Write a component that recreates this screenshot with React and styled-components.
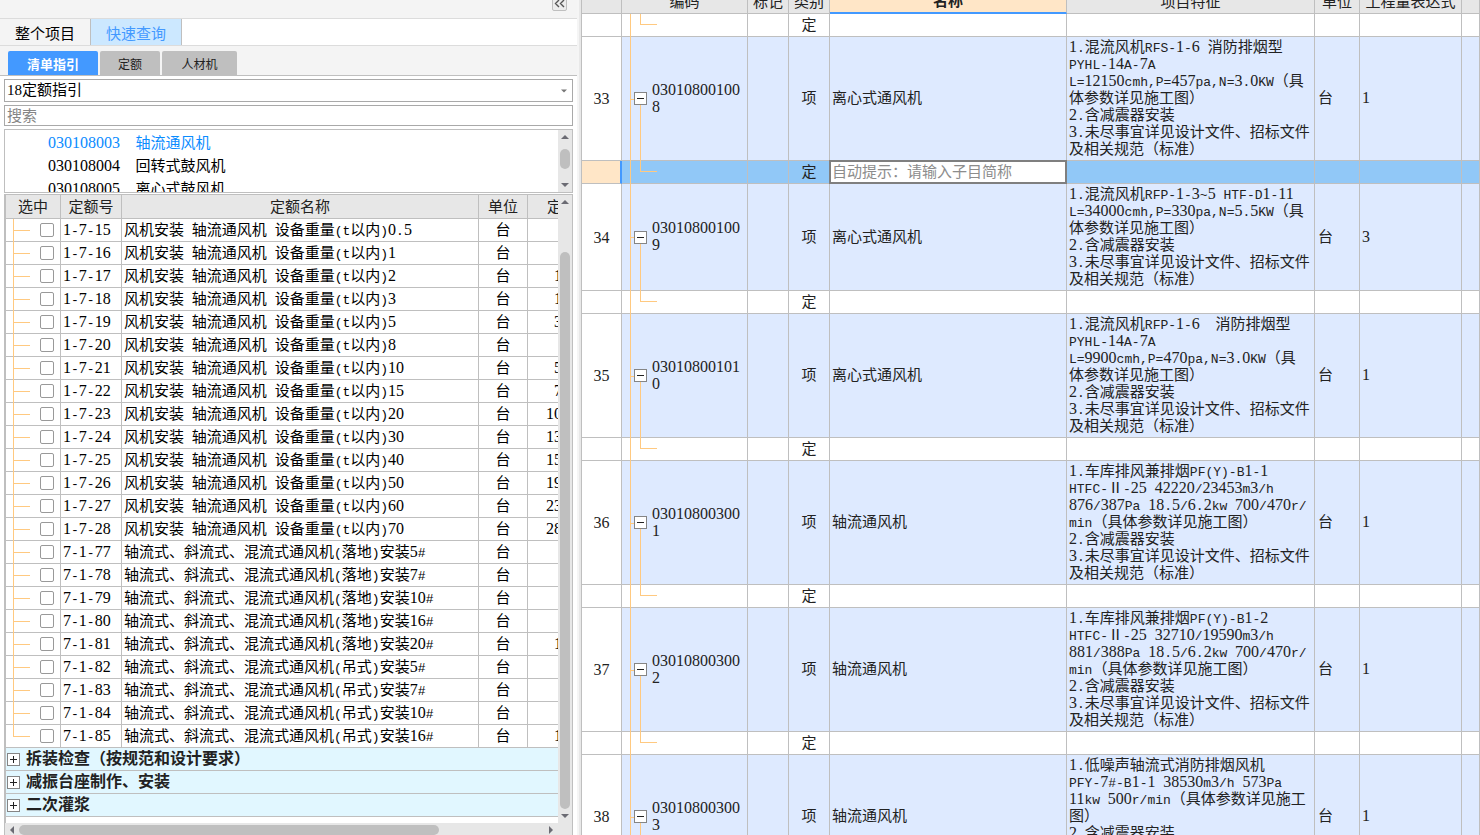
import React, { useState } from 'react';
import styled, { createGlobalStyle, css } from 'styled-components';

const LINE = '#bfbfbf';
const TREE = '#ffc980';
const CJK = '"Noto Sans CJK SC", sans-serif';

const GlobalStyle = createGlobalStyle`
  * {
    box-sizing: border-box;
  }
  body {
    margin: 0;
    overflow: hidden;
    background: #fff;
    color: #000;
    font-family: ${CJK};
    font-size: 15px;
    line-height: 17px;
  }
  button, input, select {
    margin: 0;
    padding: 0;
    border: 0;
    border-radius: 0;
    outline: 0;
    background: none;
    color: inherit;
    font: inherit;
  }
`;

const Page = styled.div`
  display: flex;
  height: 100vh;
  overflow: hidden;
`;

/* ---------- text ---------- */

const Digits = styled.span`
  font-family: "Liberation Serif", serif;
  font-size: 16px;
  line-height: 0;
`;

const Latin = styled.span`
  font-family: "Liberation Mono", monospace;
  font-size: 13px;
  line-height: 0;
`;

// half-width characters get their own fonts so they stay on an 8px grid
function Mixed({ children }) {
    const parts = String(children).match(/[0-9]+|[ -/:-~]+|[^ -~]+/g) || [];
    return parts.map((part, i) => {
        if (/^[0-9]/.test(part)) return <Digits key={i}>{part}</Digits>;
        if (/^[ -~]/.test(part)) return <Latin key={i}>{part}</Latin>;
        return <React.Fragment key={i}>{part}</React.Fragment>;
    });
}

/* ---------- left panel ---------- */

const SidePanel = styled.aside`
  display: flex;
  flex-direction: column;
  flex: 0 0 577px;
  min-width: 0;
`;

const TitleBar = styled.div`
  display: flex;
  flex: 0 0 19px;
  justify-content: flex-end;
  align-items: flex-start;
  padding-right: 10px;
  border-bottom: 1px solid #dcdcdc;
  background: #f4f4f4;
`;

const CollapseButton = styled.button`
  display: flex;
  align-items: center;
  justify-content: center;
  width: 15px;
  height: 15px;
  margin-top: -4px;
  border: 1px solid ${LINE};
  border-radius: 2px;
  background: #ececec;
`;

const MainTabs = styled.div`
  display: flex;
  flex: 0 0 27px;
  border-bottom: 1px solid #dcdcdc;
`;

const MainTab = styled.button`
  width: 91px;
  padding-top: 1px;
  border-right: 1px solid ${LINE};
  background: ${(p) => (p.$active ? '#cce8ff' : '#f4f4f4')};
  color: ${(p) => (p.$active ? '#4399ff' : '#000')};
`;

const SubTabs = styled.div`
  display: flex;
  flex: 0 0 30px;
  align-items: flex-end;
  gap: 2px;
  padding-left: 8px;
  border-bottom: 1px solid ${LINE};
  background: #f4f4f4;
`;

const SubTab = styled.button`
  width: ${(p) => p.$width}px;
  height: 24px;
  border-radius: 2px 2px 0 0;
  background: ${LINE};
  color: #222;
  font-size: 12px;
  ${(p) => p.$active && css`
    background: #4399ff;
    color: #fff;
    font-size: 13px;
    font-weight: bold;
  `}
`;

const SideBody = styled.div`
  display: flex;
  flex: 1;
  flex-direction: column;
  min-height: 0;
  margin-bottom: -3px;
  padding: 3px 4px 0;
`;

const SelectBox = styled.div`
  display: grid;
  flex: 0 0 23px;
  grid-template-columns: 1fr 16px;
  align-items: center;
  margin-bottom: 3px;
  border: 1px solid #a9a9a9;
`;

const Select = styled.select`
  grid-area: 1 / 1 / 2 / 3;
  height: 21px;
  padding-left: 2px;
  appearance: none;
  font-family: "Liberation Serif", ${CJK};
`;

const SelectArrow = styled.svg`
  grid-area: 1 / 2 / 2 / 3;
  justify-self: center;
  pointer-events: none;
`;

const SearchInput = styled.input`
  flex: 0 0 21px;
  margin-bottom: 3px;
  padding: 0 0 2px 2px;
  border: 1px solid #a9a9a9;
  &::placeholder {
    color: #858585;
  }
`;

const ListBox = styled.div`
  display: flex;
  flex: 0 0 64px;
  height: 64px;
  min-height: 0;
  margin-bottom: 1px;
  overflow: hidden;
  border: 1px solid ${LINE};
`;

const List = styled.ul`
  flex: 1;
  margin: 0;
  padding: 0;
  overflow: hidden;
  list-style: none;
`;

const ListItem = styled.li`
  height: 23px;
  padding-left: 43px;
  line-height: 23px;
  white-space: pre;
  color: ${(p) => (p.$active ? '#0a8cff' : '#000')};
`;

/* ---------- scrollbars ---------- */

const ScrollTrack = styled.div`
  display: flex;
  flex: 0 0 14px;
  flex-direction: ${(p) => (p.$horizontal ? 'row' : 'column')};
  align-items: center;
  min-width: 0;
  background: #e7e7e7;
`;

const ScrollSpace = styled.div`
  flex: ${(p) => p.$grow || 0} 0 ${(p) => p.$size || 0}px;
`;

const ScrollThumb = styled.div`
  flex: ${(p) => p.$grow || 0} 0 ${(p) => p.$size || 0}px;
  width: ${(p) => (p.$horizontal ? 'auto' : '10px')};
  height: ${(p) => (p.$horizontal ? '10px' : 'auto')};
  border-radius: 5px;
  background: ${LINE};
`;

const ArrowIcon = styled.svg`
  flex: none;
`;

const ARROWS = {
    up: 'M7 5 L11 9 H3 Z',
    down: 'M7 9 L11 5 H3 Z',
    left: 'M5 7 L9 3 V11 Z',
    right: 'M9 7 L5 3 V11 Z',
};

function Arrow({ dir }) {
    return (
        <ArrowIcon width="14" height="14" viewBox="0 0 14 14">
            <path d={ARROWS[dir]} fill="#6b6b73" />
        </ArrowIcon>
    );
}

/* ---------- quota table ---------- */

const QuotaBox = styled.div`
  display: flex;
  flex: 1;
  min-height: 0;
  border: 1px solid ${LINE};
`;

const QuotaMain = styled.div`
  display: flex;
  flex: 1;
  flex-direction: column;
  min-width: 0;
`;

const QuotaView = styled.div`
  flex: 1;
  min-height: 0;
  overflow: hidden;
  border-left: 1px solid ${LINE};
`;

const QuotaTable = styled.table`
  width: 556px;
  border-collapse: separate;
  border-spacing: 0;
  table-layout: fixed;
`;

const QuotaTh = styled.th`
  height: 24px;
  padding: 0 0 2px;
  border-right: 1px solid ${LINE};
  border-bottom: 1px solid ${LINE};
  background: #e7e7e7;
  color: #222;
  font-weight: normal;
  white-space: nowrap;
  &:last-child {
    padding-left: 19px;
    text-align: left;
  }
`;

const QuotaTd = styled.td`
  height: 23px;
  padding: 0 0 4px 2px;
  border-right: 1px solid ${LINE};
  border-bottom: 1px solid ${LINE};
  white-space: pre;
`;

const PickTd = styled(QuotaTd)`
  padding: 0;
`;

const UnitTd = styled(QuotaTd)`
  padding-left: 0;
  text-align: center;
`;

const PriceTd = styled(QuotaTd)`
  border-right: 0;
  text-align: right;
`;

const PickCell = styled.div`
  display: flex;
  align-items: center;
  height: 22px;
  padding-left: 7px;
`;

const Branch = styled.span`
  flex: 0 0 17px;
  height: 22px;
  margin-right: 10px;
  &::before {
    content: "";
    display: block;
    height: 11px;
    border-left: 1px solid ${TREE};
    border-bottom: 1px solid ${TREE};
  }
  &::after {
    content: "";
    display: block;
    height: 11px;
    border-left: 1px solid ${(p) => (p.$last ? 'transparent' : TREE)};
  }
`;

const CheckBox = styled.input`
  width: 14px;
  height: 14px;
  border: 1px solid #999;
  border-radius: 2px;
  background: #fff;
  appearance: none;
  &:checked {
    background: #4399ff;
  }
`;

const GroupTd = styled.td`
  height: 23px;
  padding: 0 0 0 1px;
  border-bottom: 1px solid ${LINE};
  background: #e1f7ff;
  color: #222;
`;

const GroupLabel = styled.div`
  display: flex;
  align-items: center;
  gap: 6px;
  height: 22px;
  font-size: 16px;
  font-weight: bold;
`;

const GroupName = styled.span`
  padding-bottom: 3px;
`;

const ToggleButton = styled.button`
  display: flex;
  flex: none;
  width: 13px;
  height: 13px;
  border: 1px solid #858585;
  background: #fff;
`;

function Toggle({ open, label }) {
    return (
        <ToggleButton aria-label={label}>
            <svg width="11" height="11" viewBox="0 0 11 11">
                <path d={open ? 'M2 5.5H9' : 'M2 5.5H9M5.5 2V9'} stroke="#222" fill="none" />
            </svg>
        </ToggleButton>
    );
}

/* ---------- bill table ---------- */

const Splitter = styled.div`
  flex: 0 0 5px;
  border-right: 1px solid ${LINE};
  background: linear-gradient(90deg, #f5f5f5 0 2px, #e8e8e8 2px);
`;

const BillPanel = styled.main`
  flex: 1;
  min-width: 0;
  overflow: hidden;
  color: #222;
`;

// scrolled a little, so the head row is cut by the top edge
const BillTable = styled.table`
  width: 100%;
  margin-top: -9px;
  border-collapse: separate;
  border-spacing: 0;
  table-layout: fixed;
`;

const BillTh = styled.th`
  height: 23px;
  padding: 0 0 4px;
  border-right: 1px solid ${LINE};
  border-bottom: ${(p) => (p.$active ? '2px solid #4399ff' : `1px solid ${LINE}`)};
  background: ${(p) => (p.$active ? '#ffe6c7' : '#e7e7e7')};
  font-weight: ${(p) => (p.$active ? 'bold' : 'normal')};
  white-space: nowrap;
`;

const BillRow = styled.tr`
  background: ${(p) => p.$bg};
`;

const BillTd = styled.td`
  position: relative;
  height: 23px;
  padding: 0 0 4px 2px;
  border-right: 1px solid ${LINE};
  border-bottom: 1px solid ${LINE};
  white-space: pre;
`;

const IndexTd = styled(BillTd)`
  padding: 0 0 2px;
  background: #fff;
  text-align: center;
  ${(p) => p.$selected && css`
    border-right: 2px solid #4399ff;
    background: #ffe6c7;
  `}
`;

const KindTd = styled(BillTd)`
  padding-left: 0;
  text-align: center;
`;

const UnitCell = styled(BillTd)`
  padding-left: 3px;
`;

const CodeTd = styled(BillTd)`
  padding: 0 0 0 12px;
  &::before {
    content: "";
    position: absolute;
    top: 0;
    bottom: -1px;
    left: 8px;
    border-left: 1px solid ${TREE};
  }
`;

const ItemLines = styled.span`
  position: absolute;
  top: 50%;
  bottom: -1px;
  left: 8px;
  width: 11px;
  border-top: 1px solid ${TREE};
  border-right: 1px solid ${TREE};
`;

const SubLines = styled.span`
  position: absolute;
  top: 0;
  left: 18px;
  width: 17px;
  height: 11px;
  border-bottom: 1px solid ${TREE};
  border-left: 1px solid ${TREE};
`;

const CodeLabel = styled.div`
  position: relative;
  display: flex;
  align-items: center;
  gap: 5px;
`;

const CodeText = styled.div`
  width: 90px;
  padding-bottom: 4px;
  white-space: pre;
`;

const NameInput = styled.input`
  position: absolute;
  top: -1px;
  left: -1px;
  width: calc(100% + 2px);
  height: 24px;
  padding: 0 0 4px 1px;
  border: 2px solid #7f7f7f;
  background: #fff;
  &::placeholder {
    color: #8c8c8c;
  }
`;

/* ---------- data ---------- */

const guideList = [
    ['030108003', '轴流通风机'],
    ['030108004', '回转式鼓风机'],
    ['030108005', '离心式鼓风机'],
];

const fan = '风机安装 轴流通风机 设备重量(t以内)';
const floor = '轴流式、斜流式、混流式通风机(落地)安装';
const hung = '轴流式、斜流式、混流式通风机(吊式)安装';

const quotas = [
    ['1-7-15', fan + '0.5', ''],
    ['1-7-16', fan + '1', ''],
    ['1-7-17', fan + '2', '1'],
    ['1-7-18', fan + '3', '1'],
    ['1-7-19', fan + '5', '3'],
    ['1-7-20', fan + '8', ''],
    ['1-7-21', fan + '10', '5'],
    ['1-7-22', fan + '15', '7'],
    ['1-7-23', fan + '20', '10'],
    ['1-7-24', fan + '30', '13'],
    ['1-7-25', fan + '40', '15'],
    ['1-7-26', fan + '50', '19'],
    ['1-7-27', fan + '60', '23'],
    ['1-7-28', fan + '70', '28'],
    ['7-1-77', floor + '5#', ''],
    ['7-1-78', floor + '7#', ''],
    ['7-1-79', floor + '10#', ''],
    ['7-1-80', floor + '16#', ''],
    ['7-1-81', floor + '20#', '1'],
    ['7-1-82', hung + '5#', ''],
    ['7-1-83', hung + '7#', ''],
    ['7-1-84', hung + '10#', ''],
    ['7-1-85', hung + '16#', '1'],
];

const groups = ['拆装检查（按规范和设计要求）', '减振台座制作、安装', '二次灌浆'];

const commonNotes = `2.含减震器安装
3.未尽事宜详见设计文件、招标文件
及相关规范（标准）`;

const bills = [
    {
        no: 33, code: '03010800100\n8', name: '离心式通风机', qty: 1, editing: true,
        feature: `1.混流风机RFS-1-6 消防排烟型
PYHL-14A-7A
L=12150cmh,P=457pa,N=3.0KW（具
体参数详见施工图）
${commonNotes}`,
    },
    {
        no: 34, code: '03010800100\n9', name: '离心式通风机', qty: 3,
        feature: `1.混流风机RFP-1-3~5 HTF-D1-11
L=34000cmh,P=330pa,N=5.5KW（具
体参数详见施工图）
${commonNotes}`,
    },
    {
        no: 35, code: '03010800101\n0', name: '离心式通风机', qty: 1,
        feature: `1.混流风机RFP-1-6  消防排烟型
PYHL-14A-7A
L=9900cmh,P=470pa,N=3.0KW（具
体参数详见施工图）
${commonNotes}`,
    },
    {
        no: 36, code: '03010800300\n1', name: '轴流通风机', qty: 1,
        feature: `1.车库排风兼排烟PF(Y)-B1-1
HTFC-Ⅱ-25 42220/23453m3/h
876/387Pa 18.5/6.2kw 700/470r/
min（具体参数详见施工图）
${commonNotes}`,
    },
    {
        no: 37, code: '03010800300\n2', name: '轴流通风机', qty: 1,
        feature: `1.车库排风兼排烟PF(Y)-B1-2
HTFC-Ⅱ-25 32710/19590m3/h
881/388Pa 18.5/6.2kw 700/470r/
min（具体参数详见施工图）
${commonNotes}`,
    },
    {
        no: 38, code: '03010800300\n3', name: '轴流通风机', qty: 1,
        feature: `1.低噪声轴流式消防排烟风机
PFY-7#-B1-1 38530m3/h 573Pa
11kw 500r/min（具体参数详见施工
图）
${commonNotes}`,
    },
];

function SubRow({ selected }) {
    return (
        <BillRow $bg={selected ? '#91c8f7' : '#fff'}>
            <IndexTd $selected={selected} />
            <CodeTd><SubLines /></CodeTd>
            <BillTd />
            <KindTd>定</KindTd>
            <BillTd>
                {selected && <NameInput aria-label="名称" placeholder="自动提示：请输入子目简称" />}
            </BillTd>
            <BillTd />
            <BillTd />
            <BillTd />
            <BillTd />
        </BillRow>
    );
}

function BillItem({ item }) {
    return (
        <>
            <BillRow $bg="#deeaff">
                <IndexTd><Mixed>{item.no}</Mixed></IndexTd>
                <CodeTd>
                    <ItemLines />
                    <CodeLabel>
                        <Toggle open label="收起" />
                        <CodeText><Mixed>{item.code}</Mixed></CodeText>
                    </CodeLabel>
                </CodeTd>
                <BillTd />
                <KindTd>项</KindTd>
                <BillTd>{item.name}</BillTd>
                <BillTd><Mixed>{item.feature}</Mixed></BillTd>
                <UnitCell>台</UnitCell>
                <BillTd><Mixed>{item.qty}</Mixed></BillTd>
                <BillTd />
            </BillRow>
            <SubRow selected={item.editing} />
        </>
    );
}

function QuotaPanel() {
    return (
        <QuotaBox>
            <QuotaMain>
                <QuotaView>
                    <QuotaTable>
                        <colgroup>
                            <col width="55" />
                            <col width="61" />
                            <col width="357" />
                            <col width="49" />
                            <col width="34" />
                        </colgroup>
                        <thead>
                            <tr>
                                <QuotaTh>选中</QuotaTh>
                                <QuotaTh>定额号</QuotaTh>
                                <QuotaTh>定额名称</QuotaTh>
                                <QuotaTh>单位</QuotaTh>
                                <QuotaTh>定</QuotaTh>
                            </tr>
                        </thead>
                        <tbody>
                            {quotas.map(([code, name, price], i) => (
                                <tr key={code}>
                                    <PickTd>
                                        <PickCell>
                                            <Branch $last={i === quotas.length - 1} />
                                            <CheckBox type="checkbox" aria-label={code} />
                                        </PickCell>
                                    </PickTd>
                                    <QuotaTd><Mixed>{code}</Mixed></QuotaTd>
                                    <QuotaTd><Mixed>{name}</Mixed></QuotaTd>
                                    <UnitTd>台</UnitTd>
                                    <PriceTd><Mixed>{price}</Mixed></PriceTd>
                                </tr>
                            ))}
                            {groups.map((group) => (
                                <tr key={group}>
                                    <GroupTd colSpan={5}>
                                        <GroupLabel>
                                            <Toggle label={group} />
                                            <GroupName>{group}</GroupName>
                                        </GroupLabel>
                                    </GroupTd>
                                </tr>
                            ))}
                        </tbody>
                    </QuotaTable>
                </QuotaView>
                <ScrollTrack $horizontal>
                    <Arrow dir="left" />
                    <ScrollThumb $horizontal $size={420} />
                    <ScrollSpace $grow={1} />
                    <Arrow dir="right" />
                </ScrollTrack>
            </QuotaMain>
            <ScrollTrack>
                <Arrow dir="up" />
                <ScrollSpace $size={43} />
                <ScrollThumb $grow={1} />
                <Arrow dir="down" />
                <ScrollSpace $size={14} />
            </ScrollTrack>
        </QuotaBox>
    );
}

function App() {
    const [keyword, setKeyword] = useState('');

    return (
        <>
            <GlobalStyle />
            <Page>
                <SidePanel>
                    <TitleBar>
                        <CollapseButton aria-label="折叠">
                            <svg width="11" height="9" viewBox="0 0 11 9">
                                <path d="M5 1L1.5 4.5L5 8M10 1L6.5 4.5L10 8" stroke="#555" strokeWidth="1.4" fill="none" />
                            </svg>
                        </CollapseButton>
                    </TitleBar>
                    <MainTabs>
                        <MainTab>整个项目</MainTab>
                        <MainTab $active>快速查询</MainTab>
                    </MainTabs>
                    <SubTabs>
                        <SubTab $width={90} $active>清单指引</SubTab>
                        <SubTab $width={60}>定额</SubTab>
                        <SubTab $width={75}>人材机</SubTab>
                    </SubTabs>
                    <SideBody>
                        <SelectBox>
                            <Select aria-label="定额指引">
                                <option>18定额指引</option>
                            </Select>
                            <SelectArrow width="6" height="4" viewBox="0 0 6 4">
                                <path d="M0 0.5H6L3 3.5Z" fill="#777" />
                            </SelectArrow>
                        </SelectBox>
                        <SearchInput
                            aria-label="搜索"
                            placeholder="搜索"
                            value={keyword}
                            onChange={(e) => setKeyword(e.target.value)}
                        />
                        <ListBox>
                            <List>
                                {guideList.map(([code, name], i) => (
                                    <ListItem key={code} $active={i === 0}>
                                        <Mixed>{code + '  ' + name}</Mixed>
                                    </ListItem>
                                ))}
                            </List>
                            <ScrollTrack>
                                <Arrow dir="up" />
                                <ScrollSpace $size={5} />
                                <ScrollThumb $size={20} />
                                <ScrollSpace $grow={1} />
                                <Arrow dir="down" />
                            </ScrollTrack>
                        </ListBox>
                        <QuotaPanel />
                    </SideBody>
                </SidePanel>
                <Splitter />
                <BillPanel>
                    <BillTable>
                        <colgroup>
                            <col width="40" />
                            <col width="126" />
                            <col width="41" />
                            <col width="41" />
                            <col width="237" />
                            <col width="248" />
                            <col width="45" />
                            <col width="102" />
                            <col />
                        </colgroup>
                        <thead>
                            <tr>
                                <BillTh />
                                <BillTh>编码</BillTh>
                                <BillTh>标记</BillTh>
                                <BillTh>类别</BillTh>
                                <BillTh $active>名称</BillTh>
                                <BillTh>项目特征</BillTh>
                                <BillTh>单位</BillTh>
                                <BillTh>工程量表达式</BillTh>
                                <BillTh />
                            </tr>
                        </thead>
                        <tbody>
                            <SubRow />
                            {bills.map((item) => (
                                <BillItem key={item.no} item={item} />
                            ))}
                        </tbody>
                    </BillTable>
                </BillPanel>
            </Page>
        </>
    );
}

export default App;
